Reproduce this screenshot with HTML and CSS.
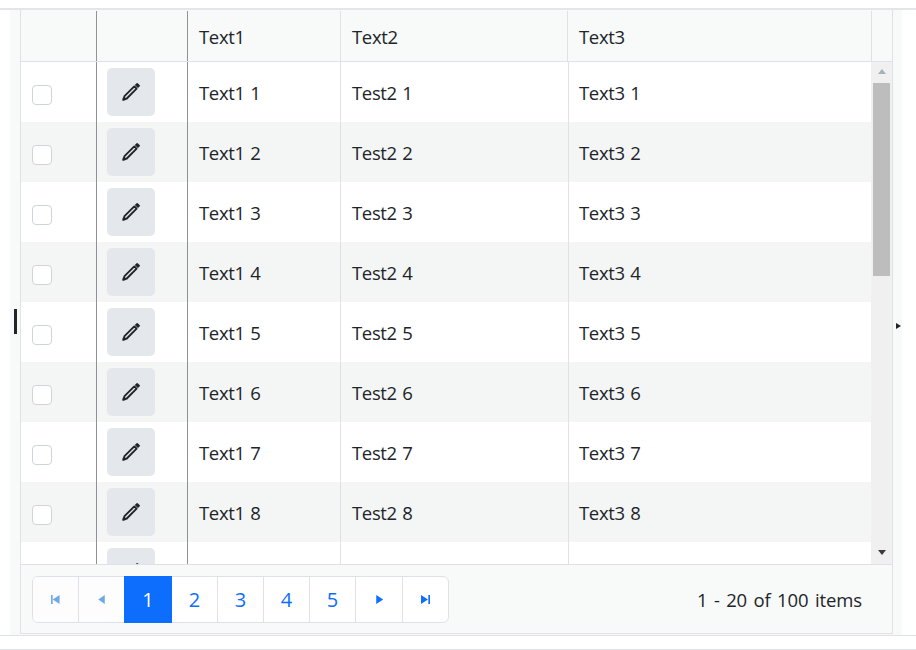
FILE: index.html
```html
<!DOCTYPE html>
<html lang="en">
<head>
<meta charset="utf-8">
<title>Grid</title>
<link rel="stylesheet" href="styles.css">
</head>
<body>
<svg class="defs" width="0" height="0" aria-hidden="true"><defs>
<symbol id="pen" viewBox="0 0 18 18"><path class="pen-body" d="M1.500 16.500 2.500 13.200 12.300 3.400 14.600 5.700 4.800 15.500Z"/><path class="pen-solid" d="M.3 17.700 1 14 4 17ZM12.800 2 14.600.3Q15.300-.2 16 .4L17.600 2Q18.200 2.700 17.600 3.400L15.900 5.100Z"/></symbol>
</defs></svg>
<div class="page">
  <div class="panel">
    <span class="handle-left"></span>
    <span class="handle-right"></span>
    <div class="grid">
      <div class="head">
        <div class="cell frozen"></div>
        <div class="cell frozen"></div>
        <div class="cell">Text1</div>
        <div class="cell">Text2</div>
        <div class="cell">Text3</div>
        <div class="head-end"></div>
      </div>
      <div class="body">
        <div class="rows">
          <div class="row"><div class="cell frozen"><span class="check"></span></div><div class="cell frozen"><button class="edit"><svg class="pen"><use href="#pen"/></svg></button></div><div class="cell">Text1 1</div><div class="cell">Test2 1</div><div class="cell last">Text3 1</div></div>
          <div class="row"><div class="cell frozen"><span class="check"></span></div><div class="cell frozen"><button class="edit"><svg class="pen"><use href="#pen"/></svg></button></div><div class="cell">Text1 2</div><div class="cell">Test2 2</div><div class="cell last">Text3 2</div></div>
          <div class="row"><div class="cell frozen"><span class="check"></span></div><div class="cell frozen"><button class="edit"><svg class="pen"><use href="#pen"/></svg></button></div><div class="cell">Text1 3</div><div class="cell">Test2 3</div><div class="cell last">Text3 3</div></div>
          <div class="row"><div class="cell frozen"><span class="check"></span></div><div class="cell frozen"><button class="edit"><svg class="pen"><use href="#pen"/></svg></button></div><div class="cell">Text1 4</div><div class="cell">Test2 4</div><div class="cell last">Text3 4</div></div>
          <div class="row"><div class="cell frozen"><span class="check"></span></div><div class="cell frozen"><button class="edit"><svg class="pen"><use href="#pen"/></svg></button></div><div class="cell">Text1 5</div><div class="cell">Test2 5</div><div class="cell last">Text3 5</div></div>
          <div class="row"><div class="cell frozen"><span class="check"></span></div><div class="cell frozen"><button class="edit"><svg class="pen"><use href="#pen"/></svg></button></div><div class="cell">Text1 6</div><div class="cell">Test2 6</div><div class="cell last">Text3 6</div></div>
          <div class="row"><div class="cell frozen"><span class="check"></span></div><div class="cell frozen"><button class="edit"><svg class="pen"><use href="#pen"/></svg></button></div><div class="cell">Text1 7</div><div class="cell">Test2 7</div><div class="cell last">Text3 7</div></div>
          <div class="row"><div class="cell frozen"><span class="check"></span></div><div class="cell frozen"><button class="edit"><svg class="pen"><use href="#pen"/></svg></button></div><div class="cell">Text1 8</div><div class="cell">Test2 8</div><div class="cell last">Text3 8</div></div>
          <div class="row"><div class="cell frozen"></div><div class="cell frozen"><button class="edit"><svg class="pen"><use href="#pen"/></svg></button></div><div class="cell"></div><div class="cell"></div><div class="cell last"></div></div>
        </div>
        <div class="scrollbar">
          <span class="arrow-up"></span>
          <span class="thumb"></span>
          <span class="arrow-down"></span>
        </div>
      </div>
      <div class="pager">
        <nav class="pages">
          <a class="pg"><svg class="ico faded" viewBox="0 0 16 16"><path d="M2.500 2.500h2v11h-2zM13 2.500v11L4.500 8z"/></svg></a>
          <a class="pg"><svg class="ico faded" viewBox="0 0 16 16"><path d="M12 2.500v11L4 8z"/></svg></a>
          <a class="pg active">1</a>
          <a class="pg">2</a>
          <a class="pg">3</a>
          <a class="pg">4</a>
          <a class="pg">5</a>
          <a class="pg"><svg class="ico" viewBox="0 0 16 16"><path d="M4 2.500v11L12.500 8z"/></svg></a>
          <a class="pg"><svg class="ico" viewBox="0 0 16 16"><path d="M2.500 2.500v11L11 8zM11.500 2.500h2v11h-2z"/></svg></a>
        </nav>
        <span class="summary">1 - 20 of 100 items</span>
      </div>
    </div>
  </div>
  <div class="strip"></div>
</div>
</body>
</html>
```
FILE: styles.css
```css
* { box-sizing: border-box; }
html, body { margin: 0; height: 650px; overflow: hidden; background: #fff; }
body { font-family: "Open Sans", "Noto Sans", sans-serif; font-size: 18.5px; letter-spacing: -.35px; word-spacing: 1px; color: #212529; }
.defs { position: absolute; }
.page { padding-top: 8px; height: 650px; }
.panel {
  position: relative;
  height: 628px;
  padding: 0 23px 0 20px;
  border-top: 2px solid #e3e5e8;
  border-bottom: 1px solid #dee2e6;
  background: linear-gradient(#f8f9f9, #f8f9f9) 10px 0 / 892px 100% no-repeat;
}
.handle-left { position: absolute; left: 14px; top: 299px; width: 3px; height: 25px; background: #212529; }
.handle-right { position: absolute; left: 896px; top: 313px; border-left: 5px solid #212529; border-top: 3px solid transparent; border-bottom: 3px solid transparent; }
.grid { height: 624px; border: 1px solid #dee2e6; border-top: 0; display: flex; flex-direction: column; background: #fff; }
.head { height: 52px; flex: none; display: grid; grid-template-columns: 76px 91px 153px 227px 1fr 20px; background: #f8f9f9; border-bottom: 1px solid #dee2e6; padding-top: 1px; }
.cell { display: flex; align-items: center; padding-left: 11px; border-right: 1px solid #dee2e6; height: 100%; overflow: hidden; }
.head .cell { padding-top: 1px; }
.row .cell { padding-top: 1px; }
.row .cell.frozen { padding-top: 0; padding-left: 10px; }
.cell.frozen { border-right-color: #8f9294; }
.cell.last { border-right: 0; padding-left: 10px; }
.head-end { background: #f8f9f9; }
.body { flex: 1; display: flex; min-height: 0; overflow: hidden; }
.rows { flex: 1; overflow: hidden; }
.row { height: 60px; display: grid; grid-template-columns: 76px 91px 153px 228px 1fr; background: #fff; }
.row:nth-child(even) { background: #f4f6f6; }
.check { width: 20px; height: 20px; margin-left: 1px; margin-top: 5px; border: 1px solid #ced4da; border-radius: 4px; background: #fff; }
.edit { width: 48px; height: 48px; padding: 0; border: 0; border-radius: 5px; background: #e4e7ec; display: flex; align-items: center; justify-content: center; }
.pen { width: 18px; height: 18px; margin-top: -1px; }
.pen-body { fill: none; stroke: #212529; stroke-width: 1.900; stroke-linejoin: round; }
.pen-solid { fill: #212529; }
.scrollbar { width: 21px; flex: none; background: #f0f0f0; display: flex; flex-direction: column; align-items: center; position: relative; }
.arrow-up { margin-top: 7px; border-bottom: 5px solid #a9b1b8; border-left: 4.500px solid transparent; border-right: 4.500px solid transparent; }
.thumb { width: 17px; height: 193px; margin-top: 9px; background: #bcbdbc; }
.arrow-down { margin-top: auto; margin-bottom: 9px; border-top: 5px solid #3e3a3a; border-left: 4.500px solid transparent; border-right: 4.500px solid transparent; }
.pager { height: 69px; flex: none; display: flex; align-items: center; justify-content: space-between; padding: 0 30px 0 11px; border-top: 1px solid #dee2e6; background: #f8f9f9; }
.pages { width: 417px; height: 47px; display: grid; grid-template-columns: 46px 45px 48px 46px 46px 46px 46px 47px 45px; background: #fff; border: 1px solid #dee2e6; border-radius: 6px; }
.pages:first-child { margin-top: 1px; }
.pg { display: flex; align-items: center; justify-content: center; color: #0d6efd; font-size: 20px; letter-spacing: 0; border-right: 1px solid #dee2e6; }
.pg:nth-child(1), .pg:nth-child(2) { background: #fdfdfe; }
.pg:nth-child(1) { border-radius: 5px 0 0 5px; }
.pg:nth-child(2) { border-right: 0; }
.pg:last-child { border-right: 0; }
.pg.active { background: #0d6efd; color: #fff; margin: -1px 0; border-right: 0; }
.ico { width: 13px; height: 13px; fill: #0d6efd; }
.ico.faded { fill: #6ea8e8; }
.summary { letter-spacing: -.1px; word-spacing: 1.700px; }
.strip { height: 14px; border-bottom: 1px solid #dee2e6; }
```
